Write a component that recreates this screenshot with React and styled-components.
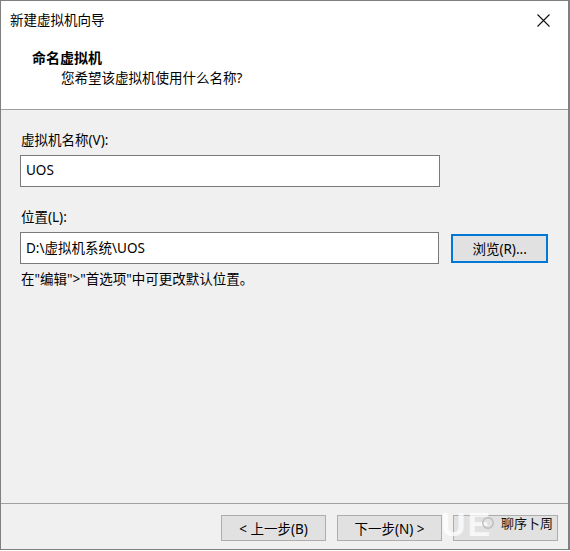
import React from "react";
import styled, { createGlobalStyle } from "styled-components";

const FONT = `"Noto Sans", "Noto Sans CJK SC", "Liberation Sans", sans-serif`;

const Global = createGlobalStyle`
  html, body { margin: 0; padding: 0; background: #ffffff; }
  body { font-family: ${FONT}; }
`;

const Window = styled.div`
  position: relative;
  width: 570px;
  height: 550px;
  box-sizing: border-box;
  border: 1px solid #7f7f7f;
  border-right-width: 2px;
  background: #f0f0f0;
  display: flex;
  flex-direction: column;
  font-size: 13.5px;
  color: #000;
  overflow: hidden;
`;

const Top = styled.div`
  background: #ffffff;
  height: 108px;
  border-bottom: 1px solid #a0a0a0;
  display: flex;
  flex-direction: column;
`;

const TitleBar = styled.div`
  height: 38px;
  display: flex;
  align-items: center;
  justify-content: space-between;
  padding-left: 9px;
`;

const Title = styled.span`
  font-size: 13.5px;
  line-height: 1;
  margin-top: 1px;
`;

const CloseBtn = styled.div`
  width: 44px;
  height: 38px;
  display: flex;
  align-items: center;
  justify-content: center;
  margin-right: 3px;
`;

const Header = styled.div`
  display: flex;
  flex-direction: column;
  padding-left: 31px;
  padding-top: 10px;
  gap: 4px;
`;

const HeaderTitle = styled.div`
  font-weight: 700;
  font-size: 14px;
  line-height: 17px;
`;

const HeaderSub = styled.div`
  padding-left: 29px;
  font-size: 13.5px;
  line-height: 17px;
`;

const Body = styled.div`
  flex: 1;
  display: flex;
  flex-direction: column;
  padding: 21px 20px 0 19px;
`;

const Label = styled.label`
  display: block;
  padding-left: 1px;
  line-height: 18px;
  margin-bottom: ${(p) => p.$mb || 6}px;
`;

const Row = styled.div`
  display: flex;
  align-items: center;
  gap: 12px;
`;

const Field = styled.div`
  box-sizing: border-box;
  width: 420px;
  height: 32px;
  border: 1px solid #7a7a7a;
  background: #fff;
  display: flex;
  align-items: center;
  padding: 0 0 3px 5px;
  font-family: ${FONT};
  font-size: 13.5px;
  margin-bottom: ${(p) => p.$mb || 0}px;
`;

const Button = styled.button`
  box-sizing: border-box;
  width: ${(p) => p.$w || 105}px;
  height: ${(p) => p.$h || 26}px;
  background: #e1e1e1;
  border: ${(p) => (p.$focus ? "2px solid #0078d7" : "1px solid #adadad")};
  font-family: ${FONT};
  font-size: 13.5px;
  color: #000;
  padding: 0;
  display: flex;
  align-items: center;
  justify-content: center;
`;

const Hint = styled.div`
  margin-top: 6px;
  line-height: 18px;
  padding-left: 1px;
`;

const Footer = styled.div`
  height: 46px;
  border-top: 1px solid #a0a0a0;
  display: flex;
  justify-content: flex-end;
  align-items: flex-start;
  padding-top: 11px;
  padding-right: 10px;
  gap: 11px;
  box-sizing: border-box;
`;

const Watermark = styled.div`
  position: absolute;
  left: 440px;
  bottom: 4px;
  width: 120px;
  height: 40px;
  pointer-events: none;
`;

const WmLetters = styled.span`
  position: absolute;
  left: 0;
  top: 2px;
  font-family: "Liberation Sans", sans-serif;
  font-weight: 700;
  font-size: 34px;
  color: rgba(255, 255, 255, 0.75);
  letter-spacing: 2px;
  line-height: 1;
`;

const WmText = styled.span`
  position: absolute;
  left: 40px;
  top: 8px;
  font-size: 13px;
  color: #111;
  white-space: nowrap;
  display: flex;
  align-items: center;
  gap: 6px;
`;

export default function App() {
  return (
    <>
      <Global />
      <Window>
        <Top>
          <TitleBar>
            <Title>新建虚拟机向导</Title>
            <CloseBtn>
              <svg width="13" height="13" viewBox="0 0 13 13">
                <path d="M0.5 0.5 L12.5 12.5 M12.5 0.5 L0.5 12.5" stroke="#111" strokeWidth="1.1" fill="none" />
              </svg>
            </CloseBtn>
          </TitleBar>
          <Header>
            <HeaderTitle>命名虚拟机</HeaderTitle>
            <HeaderSub>您希望该虚拟机使用什么名称?</HeaderSub>
          </Header>
        </Top>
        <Body>
          <Label>虚拟机名称(V):</Label>
          <Field $mb={21}>UOS</Field>
          <Label>位置(L):</Label>
          <Row>
            <Field>D:\虚拟机系统\UOS</Field>
            <Button $w={97} $h={29} $focus>浏览(R)...</Button>
          </Row>
          <Hint>在"编辑"&gt;"首选项"中可更改默认位置。</Hint>
        </Body>
        <Footer>
          <Button>&lt; 上一步(B)</Button>
          <Button>下一步(N) &gt;</Button>
          <Button />
        </Footer>
        <Watermark>
          <WmLetters>UE</WmLetters>
          <WmText>
            <svg width="14" height="14" viewBox="0 0 16 16">
              <circle cx="8" cy="8" r="6" stroke="#bbb" strokeWidth="1.5" fill="none" />
            </svg>
            聊序卜周
          </WmText>
        </Watermark>
      </Window>
    </>
  );
}
